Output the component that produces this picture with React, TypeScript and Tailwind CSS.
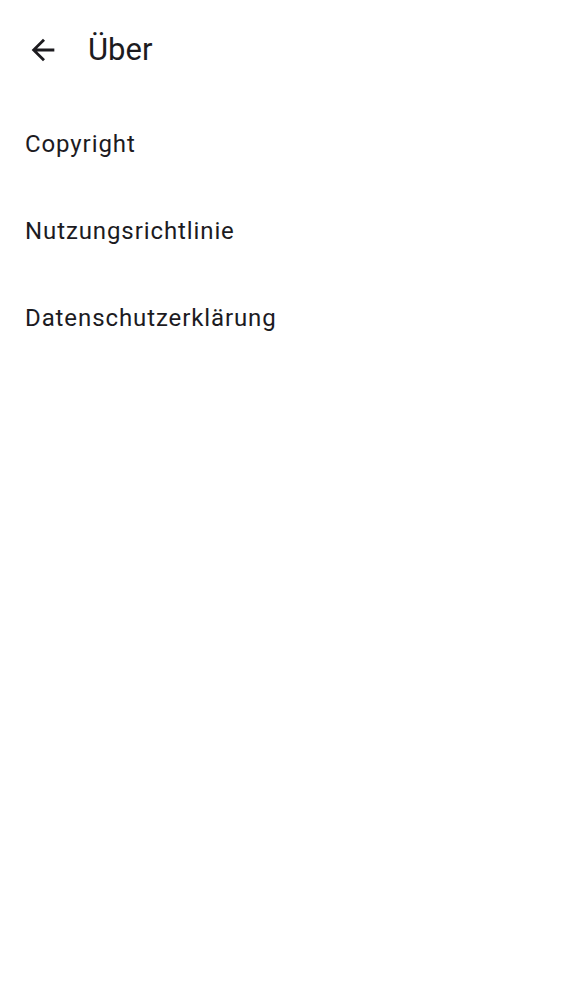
export default function App() {
  const items = ['Copyright', 'Nutzungsrichtlinie', 'Datenschutzerklärung'];
  return (
    <div className="w-[562px] h-[1000px] bg-white text-[#1c1b1f]" style={{ fontFamily: 'Roboto, sans-serif' }}>
      <header className="flex items-center h-[100px] px-[26px]">
        <svg width="34" height="34" viewBox="0 0 24 24" fill="currentColor" className="shrink-0">
          <path d="M20 11H7.83l5.59-5.59L12 4l-8 8 8 8 1.41-1.41L7.83 13H20v-2z" />
        </svg>
        <h1 className="ml-[28px] text-[31px] font-normal">Über</h1>
      </header>
      <ul>
        {items.map((item) => (
          <li key={item} className="h-[87px] flex items-center px-[25px] text-[24px] tracking-[0.9px]">
            {item}
          </li>
        ))}
      </ul>
    </div>
  );
}
